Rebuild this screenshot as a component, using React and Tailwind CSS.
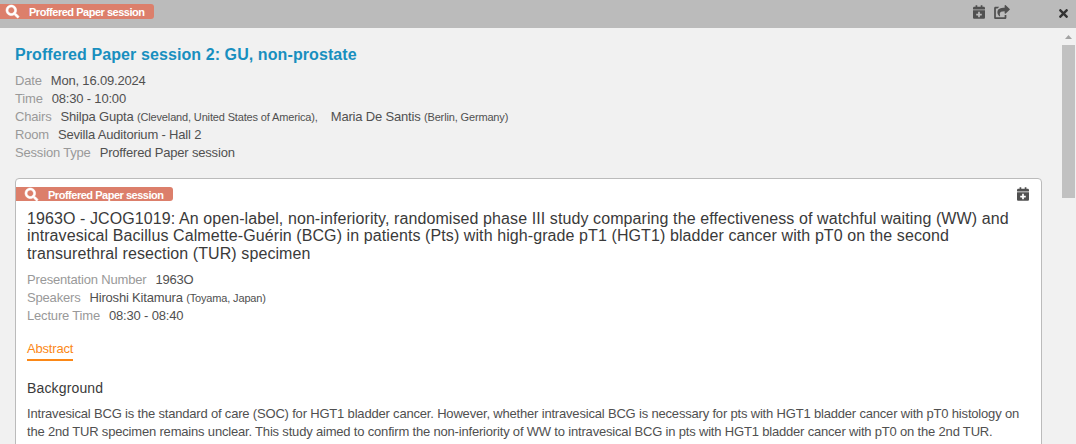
import React from 'react';
import { FaCalendarPlus, FaSearch, FaShareSquare, FaTimes } from 'react-icons/fa';

const sessionDetails = [
  { label: 'Date', value: 'Mon, 16.09.2024' },
  { label: 'Time', value: '08:30 - 10:00' },
  {
    label: 'Chairs',
    people: [
      { name: 'Shilpa Gupta', place: '(Cleveland, United States of America),' },
      { name: 'Maria De Santis', place: '(Berlin, Germany)' },
    ],
  },
  { label: 'Room', value: 'Sevilla Auditorium - Hall 2' },
  { label: 'Session Type', value: 'Proffered Paper session' },
];

const presentationDetails = [
  { label: 'Presentation Number', value: '1963O' },
  { label: 'Speakers', people: [{ name: 'Hiroshi Kitamura', place: '(Toyama, Japan)' }] },
  { label: 'Lecture Time', value: '08:30 - 08:40' },
];

const SessionBadge = ({ className }) => (
  <div className={`flex items-center rounded-r-[3px] bg-[#dc7f6b] text-white ${className}`}>
    <FaSearch className="size-[13px] shrink-0 overflow-visible stroke-white stroke-[24]" />
    <span className="ml-[10px] pt-px text-[11px] leading-[14px] font-bold tracking-[-0.48px] whitespace-nowrap">
      Proffered Paper session
    </span>
  </div>
);

const DetailRow = ({ label, value, people }) => (
  <div className="flex items-baseline whitespace-nowrap">
    <dt className="mr-[9px] text-[#999]">{label}</dt>
    <dd className="flex items-baseline gap-[13px]">
      {value}
      {people &&
        people.map((person) => (
          <span key={person.name}>
            {person.name} <span className="text-[11px] tracking-[-0.15px]">{person.place}</span>
          </span>
        ))}
    </dd>
  </div>
);

const DetailList = ({ items }) => (
  <dl className="text-[13px] leading-[18px] tracking-[-0.18px] text-[#505050]">
    {items.map((item) => (
      <DetailRow key={item.label} {...item} />
    ))}
  </dl>
);

const Scrollbar = () => (
  <div className="flex w-[14px] shrink-0 flex-col bg-[#f1f1f1] pt-[7px]">
    <svg className="ml-[3px] h-1 w-[7px]" viewBox="0 0 7 4">
      <path d="M3.5 0 7 4H0z" fill="#a3a3a3" />
    </svg>
    <div className="mt-[6px] h-[153px] w-[13px] bg-[#c1c1c1]" />
  </div>
);

const PresentationCard = () => (
  <article className="mt-[16px] h-[400px] w-[1027px] rounded-[4px] border border-[#bbb] bg-white pt-[8px] text-[#505050]">
    <div className="flex h-[15px] items-start justify-between pr-[12px]">
      <SessionBadge className="h-[14px] w-[157px] pl-[9px]" />
      <FaCalendarPlus className="h-[14px] w-[12px]" />
    </div>
    <div className="px-[11px]">
      <h2 className="mt-[7.7px] text-[16px] leading-[17.6px] tracking-[0.09px] whitespace-nowrap text-[#3a3a3a]">
        1963O - JCOG1019: An open-label, non-inferiority, randomised phase III study comparing the effectiveness of watchful waiting (WW) and
        <br />
        intravesical Bacillus Calmette-Guérin (BCG) in patients (Pts) with high-grade pT1 (HGT1) bladder cancer with pT0 on the second
        <br />
        transurethral resection (TUR) specimen
      </h2>
      <div className="mt-[8.5px]">
        <DetailList items={presentationDetails} />
      </div>
      <button className="mt-[15px] block border-b-2 border-[#fb8817] pb-px text-[13px] leading-[18px] tracking-[-0.18px] text-[#fb8817]">
        Abstract
      </button>
      <h3 className="mt-[18px] text-[14px] leading-[18px] tracking-[0.15px] text-[#3a3a3a]">Background</h3>
      <p className="mt-[8px] text-[13px] leading-[18px] tracking-[-0.184px] whitespace-nowrap">
        Intravesical BCG is the standard of care (SOC) for HGT1 bladder cancer. However, whether intravesical BCG is necessary for pts with HGT1 bladder cancer with pT0 histology on
        <br />
        the 2nd TUR specimen remains unclear. This study aimed to confirm the non-inferiority of WW to intravesical BCG in pts with HGT1 bladder cancer with pT0 on the 2nd TUR.
      </p>
    </div>
  </article>
);

const App = () => {
  return (
    <main className="flex h-[444px] w-[1076px] flex-col overflow-hidden bg-[#f1f1f1] font-['Liberation_Sans',Arial,sans-serif]">
      <header className="flex h-[28px] shrink-0 items-start bg-[#bbb] text-[#505050]">
        <SessionBadge className="mt-[4px] h-[15px] w-[154px] pl-[6px]" />
        <FaCalendarPlus className="mt-[5px] ml-auto h-[14px] w-[12px]" />
        <FaShareSquare className="mt-[5px] ml-[9px] h-[14px] w-[16px]" />
        <FaTimes className="mt-[7px] mr-[6px] ml-[47px] size-[13px] text-[#333]" />
      </header>
      <div className="flex min-h-0 flex-1">
        <section className="min-w-0 flex-1 overflow-hidden pt-[18px] pl-[15px]">
          <h1 className="mb-[8px] text-[16px] leading-[18px] font-bold tracking-[0.09px] text-[#188fbf]">
            Proffered Paper session 2: GU, non-prostate
          </h1>
          <DetailList items={sessionDetails} />
          <PresentationCard />
        </section>
        <Scrollbar />
      </div>
    </main>
  );
};

export default App;
